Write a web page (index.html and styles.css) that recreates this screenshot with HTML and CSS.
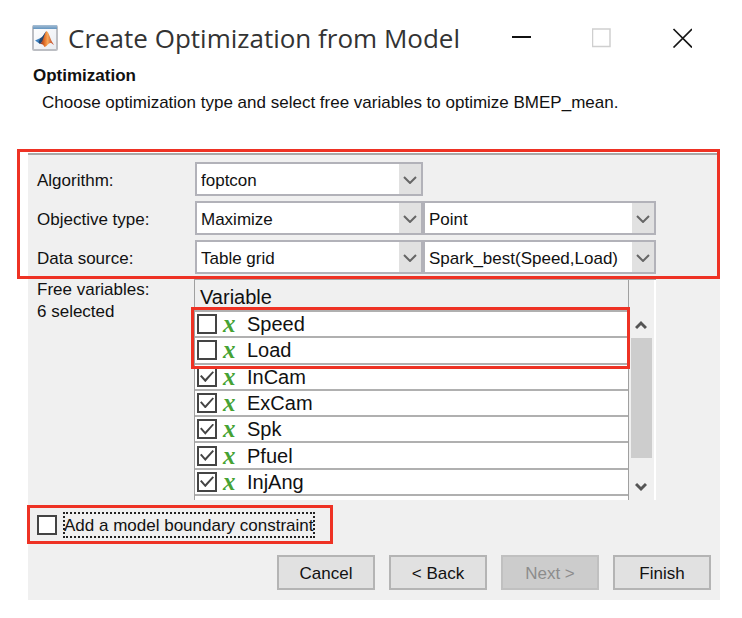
FILE: index.html
```html
<!DOCTYPE html>
<html lang="en">
<head>
<meta charset="utf-8">
<title>Create Optimization from Model</title>
<link rel="stylesheet" href="styles.css">
</head>
<body>
<main class="window">
  <header class="titlebar">
    <svg class="app-icon" viewBox="0 0 26 26" aria-hidden="true">
      <defs>
        <linearGradient id="bar" x1="0" x2="0" y1="0" y2="1"><stop offset="0" stop-color="#a9bfd4"/><stop offset="1" stop-color="#6495c0"/></linearGradient>
        <linearGradient id="page" x1="0" x2="1" y1="0" y2="1"><stop offset="0" stop-color="#ffffff"/><stop offset="1" stop-color="#e9ecf1"/></linearGradient>
        <linearGradient id="flame" x1="0" x2="1"><stop offset="0" stop-color="#8a2a1a"/><stop offset=".35" stop-color="#e8762c"/><stop offset=".55" stop-color="#f7a85a"/><stop offset="1" stop-color="#b5321c"/></linearGradient>
      </defs>
      <rect x="1" y="1" width="24" height="24" rx="1" fill="url(#page)" stroke="#bcbec3" stroke-width="2"/>
      <rect x="1" y="0" width="24" height="4" fill="url(#bar)"/>
      <path d="M3 15.500 L8.500 13 C10.500 12.500 12 9 14 6.500 L11.500 15 L8 19 Z" fill="#3f82c0"/>
      <path d="M8.500 13 C10.500 12.500 12 9 14 6.500 L12 15 L8 19 L6.500 17 Z" fill="#27476f"/>
      <path d="M8 19 C11 17.500 12 9 14.500 6 C17 7 18 14.500 22 20 C19.500 17.500 18 17.500 17 18.500 C15.500 20 14 21.500 12.500 22 C11.500 19.500 10 18.500 8 19 Z" fill="url(#flame)"/>
    </svg>
    <h1 class="window-title">Create Optimization from Model</h1>
    <div class="window-controls">
      <button class="control" type="button" aria-label="Minimize"><svg viewBox="0 0 20 20"><path d="M0 9H19" stroke="#111" stroke-width="2"/></svg></button>
      <button class="control" type="button" aria-label="Maximize" disabled><svg viewBox="0 0 20 20"><rect x="0.500" y="1" width="17.500" height="17.500" fill="none" stroke="#cfcfcf" stroke-width="1.500"/></svg></button>
      <button class="control" type="button" aria-label="Close"><svg viewBox="0 0 20 20"><path d="M1.500 1L20 19.500M20 1L1.500 19.500" stroke="#161616" stroke-width="1.700"/></svg></button>
    </div>
  </header>
  <section class="intro">
    <h2 class="intro-title">Optimization</h2>
    <p class="intro-text">Choose optimization type and select free variables to optimize BMEP_mean.</p>
  </section>
  <form class="panel">
    <div class="settings">
      <label class="caption" for="algorithm">Algorithm:</label>
      <div class="combo"><select id="algorithm"><option>foptcon</option></select><svg class="chevron" viewBox="0 0 14 8"><path d="M1 1L7 7L13 1"/></svg></div>
      <label class="caption" for="objective">Objective type:</label>
      <div class="combo"><select id="objective"><option>Maximize</option></select><svg class="chevron" viewBox="0 0 14 8"><path d="M1 1L7 7L13 1"/></svg></div>
      <div class="combo"><select aria-label="Objective evaluation"><option>Point</option></select><svg class="chevron" viewBox="0 0 14 8"><path d="M1 1L7 7L13 1"/></svg></div>
      <label class="caption" for="source">Data source:</label>
      <div class="combo"><select id="source"><option>Table grid</option></select><svg class="chevron" viewBox="0 0 14 8"><path d="M1 1L7 7L13 1"/></svg></div>
      <div class="combo"><select aria-label="Data source table"><option>Spark_best(Speed,Load)</option></select><svg class="chevron" viewBox="0 0 14 8"><path d="M1 1L7 7L13 1"/></svg></div>
      <span class="mark mark-settings"></span>
    </div>
    <div class="variables">
      <div class="variables-label">Free variables:<br>6 selected</div>
      <div class="list">
        <div class="list-body">
          <table class="table">
            <thead><tr><th scope="col">Variable</th></tr></thead>
            <tbody>
              <tr><td><label class="item"><input class="check" type="checkbox"><i class="symbol">x</i>Speed</label></td></tr>
              <tr><td><label class="item"><input class="check" type="checkbox"><i class="symbol">x</i>Load</label></td></tr>
              <tr><td><label class="item"><input class="check" type="checkbox" checked><i class="symbol">x</i>InCam</label></td></tr>
              <tr><td><label class="item"><input class="check" type="checkbox" checked><i class="symbol">x</i>ExCam</label></td></tr>
              <tr><td><label class="item"><input class="check" type="checkbox" checked><i class="symbol">x</i>Spk</label></td></tr>
              <tr><td><label class="item"><input class="check" type="checkbox" checked><i class="symbol">x</i>Pfuel</label></td></tr>
              <tr><td><label class="item"><input class="check" type="checkbox" checked><i class="symbol">x</i>InjAng</label></td></tr>
            </tbody>
          </table>
          <span class="mark mark-inputs"></span>
        </div>
        <div class="scrollbar">
          <button class="scroll-button" type="button" aria-label="Scroll up"><svg viewBox="0 0 12 10"><path d="M1 8L6 3L11 8"/></svg></button>
          <div class="thumb"></div>
          <button class="scroll-button" type="button" aria-label="Scroll down"><svg viewBox="0 0 12 10"><path d="M1 2L6 7L11 2"/></svg></button>
        </div>
      </div>
    </div>
    <div class="constraint">
      <input class="check" type="checkbox" id="boundary">
      <label class="focus-label" for="boundary">Add a model boundary constraint</label>
      <span class="mark mark-constraint"></span>
    </div>
    <div class="actions">
      <button class="action" type="button">Cancel</button>
      <button class="action" type="button">&lt; Back</button>
      <button class="action" type="button" disabled>Next &gt;</button>
      <button class="action" type="button">Finish</button>
    </div>
  </form>
</main>
</body>
</html>
```
FILE: styles.css
```css
* { box-sizing: border-box; }

body {
  margin: 0;
  background: #fff;
  color: #111;
  font: 17px/22px "Liberation Sans", Arial, sans-serif;
}

svg { display: block; }
button, select, input { font: inherit; color: inherit; margin: 0; }

.window { padding: 20px 22px 18px 28px; }

/* Title bar */
.titlebar {
  display: flex;
  align-items: center;
  height: 36px;
  padding: 0 28px 0 4px;
}
.app-icon { width: 26px; height: 26px; margin-right: 10px; }
.window-title {
  flex: 1;
  margin: 0;
  color: #333;
  font: 400 26px/36px "Open Sans", "Noto Sans", sans-serif;
  white-space: nowrap;
}
.window-controls { display: flex; gap: 60px; }
.control {
  width: 20px;
  height: 20px;
  padding: 0;
  border: 0;
  background: none;
}

/* Heading text */
.intro { height: 97px; padding: 9px 5px 0; }
.intro-title { margin: 0; font-size: 17px; line-height: 22px; }
.intro-text { margin: 5px 0 0 9px; white-space: nowrap; }

/* Form panel */
.panel {
  padding: 7px 9px 10px;
  background: #f0f0f0;
  border-top: 2px solid #a8a8a8;
}
.settings {
  position: relative;
  display: grid;
  grid-template-columns: 158px minmax(0, 228fr) minmax(0, 233fr);
  row-gap: 5px;
  align-items: center;
  padding-right: 55px;
}
.caption { grid-column: 1; padding-top: 4px; }
.combo { position: relative; }
.combo select {
  display: block;
  width: 100%;
  height: 34px;
  padding: 4px 28px 0 4px;
  appearance: none;
  border: 2px solid #b2b2b9;
  border-radius: 0;
  background: linear-gradient(#e1e1e1, #e1e1e1) right / 22px 100% no-repeat #fff;
}
.chevron {
  position: absolute;
  right: 6px;
  top: 14px;
  width: 14px;
  height: 8px;
  pointer-events: none;
  fill: none;
  stroke: #666;
  stroke-width: 2;
}

/* Variable list */
.variables {
  display: grid;
  grid-template-columns: 157px minmax(0, 1fr);
  padding: 5px 55px 0 0;
}
.list {
  display: grid;
  grid-template-columns: minmax(0, 1fr) 27px;
  height: 221px;
  background: #fff;
  border-top: 1px solid #a8a8a8;
}
.list-body {
  position: relative;
  border: solid #a0a0a0;
  border-width: 0 1px;
}
.table {
  width: 100%;
  height: 216px;
  border-collapse: collapse;
  font-size: 20px;
  line-height: 24px;
}
.table th {
  height: 31px;
  padding: 4px 5px 0;
  background: #f0f0f0;
  border-bottom: 2px solid #b0b0b0;
  font-weight: 400;
  text-align: left;
}
.table td { padding: 0 2px; border-bottom: 2px solid #b0b0b0; }
.item { display: flex; align-items: center; height: 24px; }
.symbol {
  width: 25px;
  padding-left: 6px;
  margin-right: 5px;
  color: #46a234;
  font: italic bold 25px/22px "Liberation Serif", serif;
}
.check {
  flex: none;
  width: 20px;
  height: 20px;
  appearance: none;
  border: 2px solid #444;
  background: #fff;
}
.check:checked {
  display: grid;
  place-items: center;
}
.check:checked::before {
  content: "";
  width: 14px;
  height: 11px;
  background: #444;
  clip-path: polygon(0 45%, 11% 34%, 37% 72%, 90% 0, 100% 10%, 38% 100%);
}
.scrollbar {
  display: flex;
  flex-direction: column;
  padding: 31px 4px 1px 0;
  background: linear-gradient(#f0f0f0, #f0f0f0) left / 25px 100% no-repeat;
}
.scroll-button {
  display: grid;
  place-items: center;
  height: 27px;
  padding: 0;
  border: 0;
  background: none;
}
.scroll-button:last-child { height: 41px; padding-top: 16px; }
.scroll-button svg {
  width: 12px;
  height: 10px;
  fill: none;
  stroke: #555;
  stroke-width: 3;
}
.thumb { flex: 1; margin-left: 2px; background: #cdcdcd; }

/* Boundary option */
.constraint {
  position: relative;
  display: flex;
  gap: 7px;
  align-items: center;
  width: max-content;
  margin-top: 13px;
}
.focus-label {
  padding-top: 2px;
  outline: 2px dotted #222;
  outline-offset: -1px;
}

/* Red callout frames */
.mark {
  position: absolute;
  border: 3px solid #ee3224;
  pointer-events: none;
}
.mark-settings { inset: -13px -9px -5px -20px; }
.mark-inputs { inset: 27px -2px auto -4px; height: 62px; }
.mark-constraint { inset: -8px -19px -7px -10px; }

/* Buttons */
.actions {
  display: flex;
  justify-content: flex-end;
  gap: 14px;
  margin-top: 18px;
}
.action {
  width: 98px;
  height: 35px;
  padding: 3px 0 0;
  border: 2px solid #b4b4b4;
  background: #e1e1e1;
}
.action:disabled { border-color: #c0c0c0; background: #ccc; color: #8c8c8c; }
```
